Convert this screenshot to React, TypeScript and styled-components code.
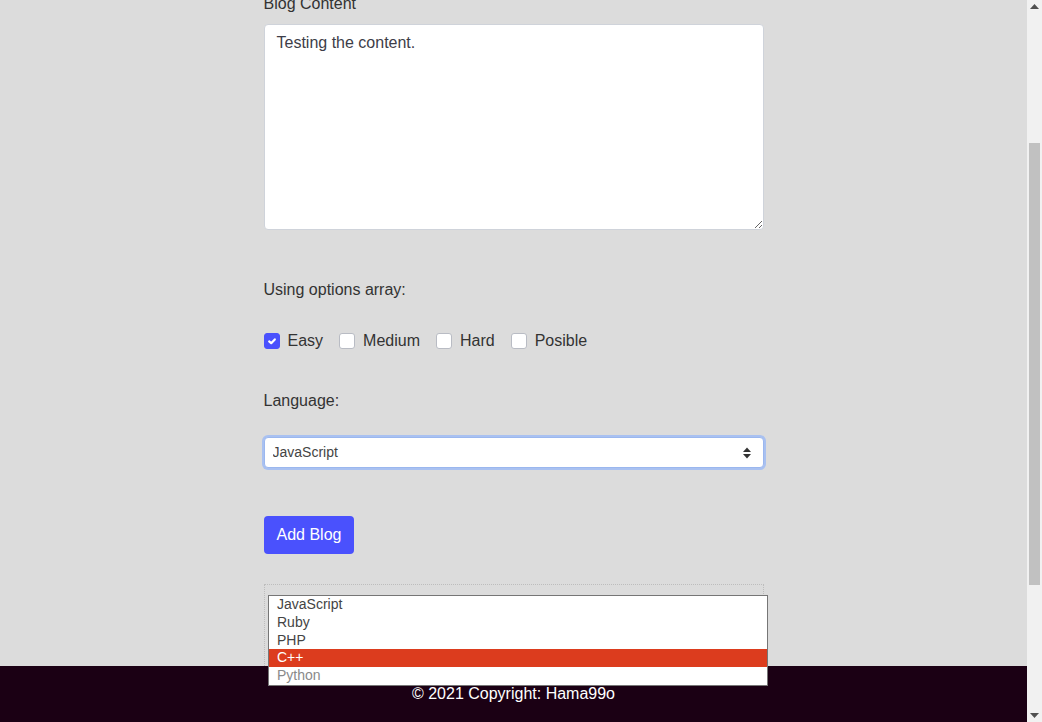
import React, { useLayoutEffect, useRef } from "react";
import styled, { createGlobalStyle } from "styled-components";

const GlobalStyle = createGlobalStyle`
  html {
    overflow-y: scroll;
  }
  body {
    margin: 0 15px 0 0;
    background: #dcdcdc;
    color: #333;
    font-family: "Liberation Sans", Arial, sans-serif;
    font-size: 16px;
  }
  * {
    box-sizing: border-box;
  }
`;

const Page = styled.div`
  padding: 40px 0 56px;
`;

const Form = styled.form`
  width: 500px;
  margin: 0 auto;
  display: flex;
  flex-direction: column;
`;

const Heading = styled.h2`
  margin: 0 0 30px;
  font-size: 28px;
  font-weight: 500;
  color: #4a51fd;
  text-align: center;
`;

const Label = styled.label<{ $top?: number }>`
  display: block;
  margin-top: ${(props) => props.$top || 0}px;
  line-height: 18px;
`;

const Input = styled.input`
  margin-top: 10px;
  height: 38px;
  padding: 6px 12px;
  font: inherit;
  color: #333;
  background: white;
  border: 1px solid #ced4da;
  border-radius: 4px;
`;

const TextArea = styled.textarea`
  margin-top: 11px;
  height: 206px;
  padding: 6px 12px;
  font: inherit;
  line-height: 24px;
  color: #3d3d48;
  background: white;
  border: 1px solid #cfd3da;
  border-radius: 4px;
  outline: none;
`;

const CheckRow = styled.div`
  margin-top: 33px;
  display: flex;
  align-items: center;
  gap: 16px;
  line-height: 18px;
`;

const CheckItem = styled.label`
  display: flex;
  align-items: center;
  gap: 8px;
`;

const Box = styled.span<{ $checked?: boolean }>`
  width: 16px;
  height: 16px;
  border-radius: 3px;
  display: flex;
  align-items: center;
  justify-content: center;
  background: ${(props) => (props.$checked ? "#4a51fd" : "white")};
  border: 1px solid ${(props) => (props.$checked ? "#4a51fd" : "#b9bcc4")};
`;

const SelectWrap = styled.div`
  margin-top: 27px;
  position: relative;
`;

const Select = styled.select`
  width: 100%;
  height: 31px;
  padding: 0 8px 1px;
  appearance: none;
  font-family: inherit;
  font-size: 14px;
  color: #444;
  background: white;
  border: 1px solid #9bb7ee;
  border-radius: 4px;
  box-shadow: 0 0 0 2px #a9c1f1;
  outline: none;
`;

const Caret = styled.svg`
  position: absolute;
  right: 12px;
  top: 10px;
  pointer-events: none;
`;

const Button = styled.button`
  margin-top: 48px;
  align-self: flex-start;
  height: 38px;
  padding: 0 13px;
  font: inherit;
  color: white;
  background: #4a51fd;
  border: none;
  border-radius: 4px;
`;

const Preview = styled.div`
  margin-top: 30px;
  height: 290px;
  padding: 16px;
  border: 1px dotted #bdbdbd;
`;

const PreviewTitle = styled.h3`
  margin: 0 0 10px;
  font-size: 20px;
`;

const PreviewText = styled.p`
  margin: 0 0 8px;
`;

const ListBox = styled.ul`
  position: fixed;
  top: 595px;
  left: 268px;
  width: 500px;
  margin: 0;
  padding: 0;
  list-style: none;
  background: white;
  border: 1px solid #767676;
  font-size: 14px;
  z-index: 5;
`;

const Option = styled.li<{ $active?: boolean; $muted?: boolean }>`
  height: 17.8px;
  line-height: 17.8px;
  padding-left: 8px;
  color: ${(props) =>
    props.$active ? "white" : props.$muted ? "#8a8a8a" : "#444"};
  background: ${(props) => (props.$active ? "#dc3c1e" : "white")};
`;

const Footer = styled.footer`
  position: fixed;
  left: 0;
  right: 15px;
  bottom: 0;
  height: 56px;
  line-height: 56px;
  text-align: center;
  color: white;
  background: #1b0014;
  z-index: 2;
`;

/* the window's scroll bar, drawn since the headless shot hides it */
const ScrollRail = styled.div`
  position: fixed;
  top: 0;
  right: 0;
  bottom: 0;
  width: 15px;
  background: #f1f1f1;
  display: flex;
  flex-direction: column;
  align-items: center;
  justify-content: space-between;
  padding: 4px 0;
  z-index: 10;
`;

const Thumb = styled.div`
  position: absolute;
  top: 143px;
  left: 2px;
  width: 11px;
  height: 442px;
  background: #c1c1c1;
`;

const levels = ["Easy", "Medium", "Hard", "Posible"];
const languages = ["JavaScript", "Ruby", "PHP", "C++", "Python"];

const App: React.FC = () => {
  const areaRef = useRef<HTMLTextAreaElement>(null);

  useLayoutEffect(() => {
    // the shot is taken with the page scrolled down to the content field
    const el = areaRef.current;
    if (el) {
      const top = el.getBoundingClientRect().top + window.scrollY;
      window.scrollTo(0, top - 24);
    }
  }, []);

  return (
    <Page>
      <GlobalStyle />
      <Form onSubmit={(e) => e.preventDefault()}>
        <Heading>Add a New Blog</Heading>
        <Label>Blog Title</Label>
        <Input type="text" defaultValue="Testing" />
        <Label $top={34}>Blog Content</Label>
        <TextArea ref={areaRef} defaultValue="Testing the content." />
        <Label $top={51}>Using options array:</Label>
        <CheckRow>
          {levels.map((level, i) => (
            <CheckItem key={level}>
              <Box $checked={i === 0}>
                {i === 0 && (
                  <svg width="10" height="10" viewBox="0 0 10 10">
                    <path
                      d="M2.2 5.4 L4.2 7.2 L7.8 3.4"
                      fill="none"
                      stroke="white"
                      strokeWidth="2.2"
                      strokeLinecap="round"
                      strokeLinejoin="round"
                    />
                  </svg>
                )}
              </Box>
              {level}
            </CheckItem>
          ))}
        </CheckRow>
        <Label $top={42}>Language:</Label>
        <SelectWrap>
          <Select defaultValue="JavaScript">
            {languages.map((lang) => (
              <option key={lang}>{lang}</option>
            ))}
          </Select>
          <Caret width="10" height="12" viewBox="0 0 10 12">
            <path d="M5 0.5 L9 5 L1 5 Z" fill="#333" />
            <path d="M5 11.5 L9 7 L1 7 Z" fill="#333" />
          </Caret>
        </SelectWrap>
        <Button type="submit">Add Blog</Button>
        <Preview>
          <PreviewTitle>Testing</PreviewTitle>
          <PreviewText>Testing the content.</PreviewText>
          <PreviewText>Difficulty: Easy</PreviewText>
          <PreviewText>Language: JavaScript</PreviewText>
        </Preview>
      </Form>
      <ListBox>
        {languages.map((lang) => (
          <Option key={lang} $active={lang === "C++"} $muted={lang === "Python"}>
            {lang}
          </Option>
        ))}
      </ListBox>
      <Footer>© 2021 Copyright: Hama99o</Footer>
      <ScrollRail>
        <svg width="9" height="5" viewBox="0 0 9 5">
          <path d="M4.5 0 L9 5 L0 5 Z" fill="#505050" />
        </svg>
        <Thumb />
        <svg width="9" height="5" viewBox="0 0 9 5">
          <path d="M0 0 L9 0 L4.5 5 Z" fill="#505050" />
        </svg>
      </ScrollRail>
    </Page>
  );
};

export default App;
